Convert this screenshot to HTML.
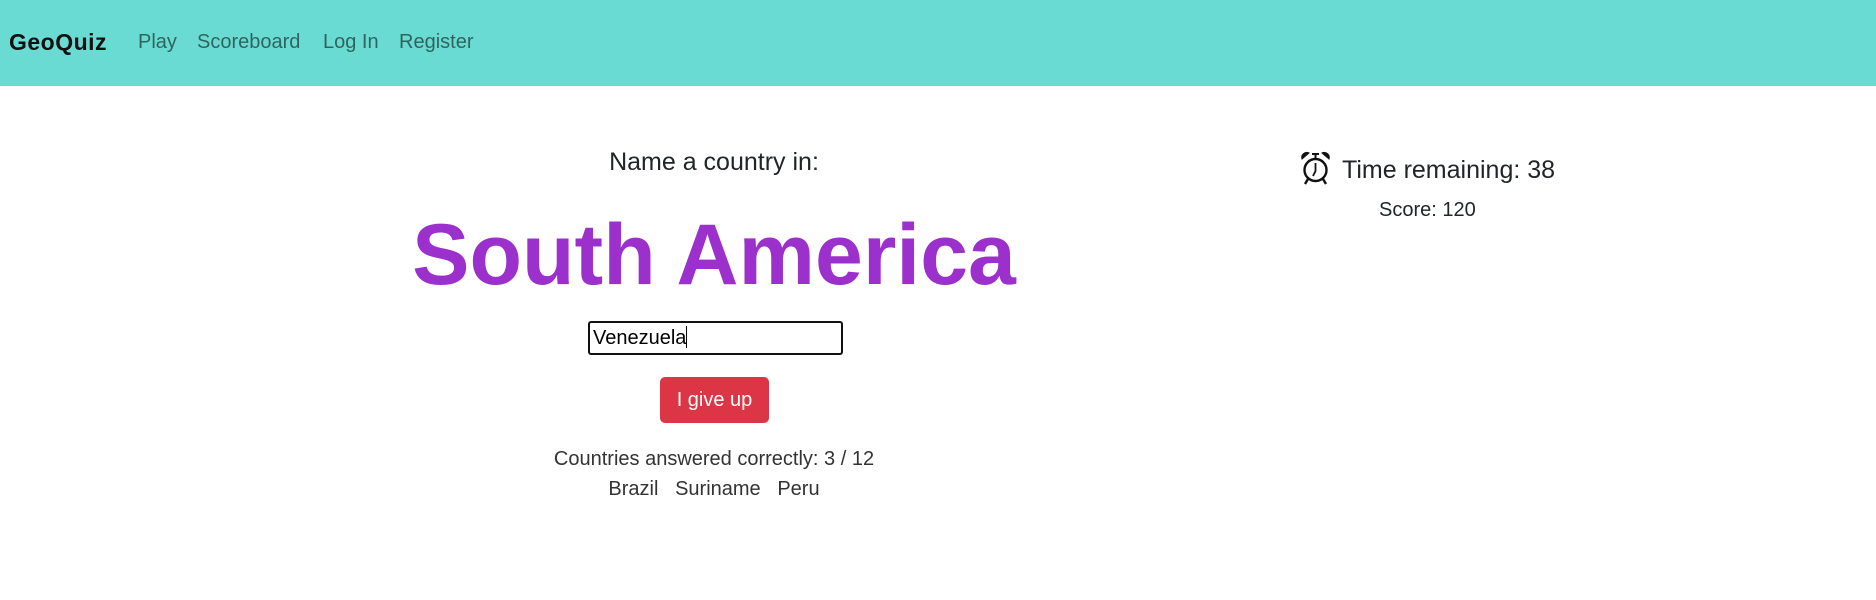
<!DOCTYPE html>
<html><head><meta charset="utf-8"><style>
html,body{margin:0;padding:0;width:1876px;height:600px;background:#fff;overflow:hidden;font-family:"Liberation Sans",sans-serif;color:#212529}
.nav{position:absolute;left:0;top:0;width:1876px;height:86px;background:#69dbd3}
.nav span{position:absolute;top:29px;font-size:20px;line-height:26px;color:rgba(0,0,0,.55);white-space:nowrap}
.nav .brand{color:#111;font-weight:bold;left:9px;font-size:23px;letter-spacing:0.5px}
.c{position:absolute;text-align:center;white-space:nowrap}
.m{left:314px;width:800px}
</style></head><body>
<div class="nav">
<span class="brand">GeoQuiz</span>
<span style="left:138px">Play</span>
<span style="left:197px">Scoreboard</span>
<span style="left:323px">Log In</span>
<span style="left:399px">Register</span>
</div>
<div class="c m" style="top:147px;font-size:25px;line-height:30px">Name a country in:</div>
<div class="c m" style="top:205px;font-size:86px;line-height:100px;color:#9b30cc;font-weight:bold">South America</div>
<div style="position:absolute;left:588px;top:321px;width:248px;height:30px;border:2px solid #111;border-radius:3px;font-size:20px;line-height:30px;padding-left:3px;color:#000">Venezuela<span style="display:inline-block;width:1px;height:22px;background:#000;vertical-align:-4px"></span></div>
<div style="position:absolute;left:660px;top:377px;width:109px;height:46px;background:#dc3545;border-radius:5px;color:#fff;font-size:20px;line-height:46px;text-align:center">I give up</div>
<div class="c m" style="top:447px;font-size:20px;line-height:24px;color:#333">Countries answered correctly: 3 / 12</div>
<div class="c m" style="top:477px;font-size:20px;line-height:24px;color:#333">Brazil&nbsp;&nbsp;&nbsp;Suriname&nbsp;&nbsp;&nbsp;Peru</div>
<svg style="position:absolute;left:1300px;top:151px" width="31" height="34" viewBox="0 0 31 34" fill="none" stroke="#111" stroke-width="2.4">
<circle cx="15.5" cy="19" r="11"/>
<path d="M15.5 12 V20 L13 25" stroke-width="1.8"/>
<path d="M2 8 A5 5 0 0 1 9 2 Z M29 8 A5 5 0 0 0 22 2 Z" fill="#111" stroke-width="1"/>
<path d="M15.5 3 V7 M12 3 H19" stroke-width="2"/>
<path d="M8 28 L5 33 M23 28 L26 33"/>
</svg>
<div class="c" style="left:1342px;top:155px;font-size:25px;line-height:30px">Time remaining: 38</div>
<div class="c" style="left:1379px;top:198px;font-size:20px;line-height:24px">Score: 120</div>
</body></html>
